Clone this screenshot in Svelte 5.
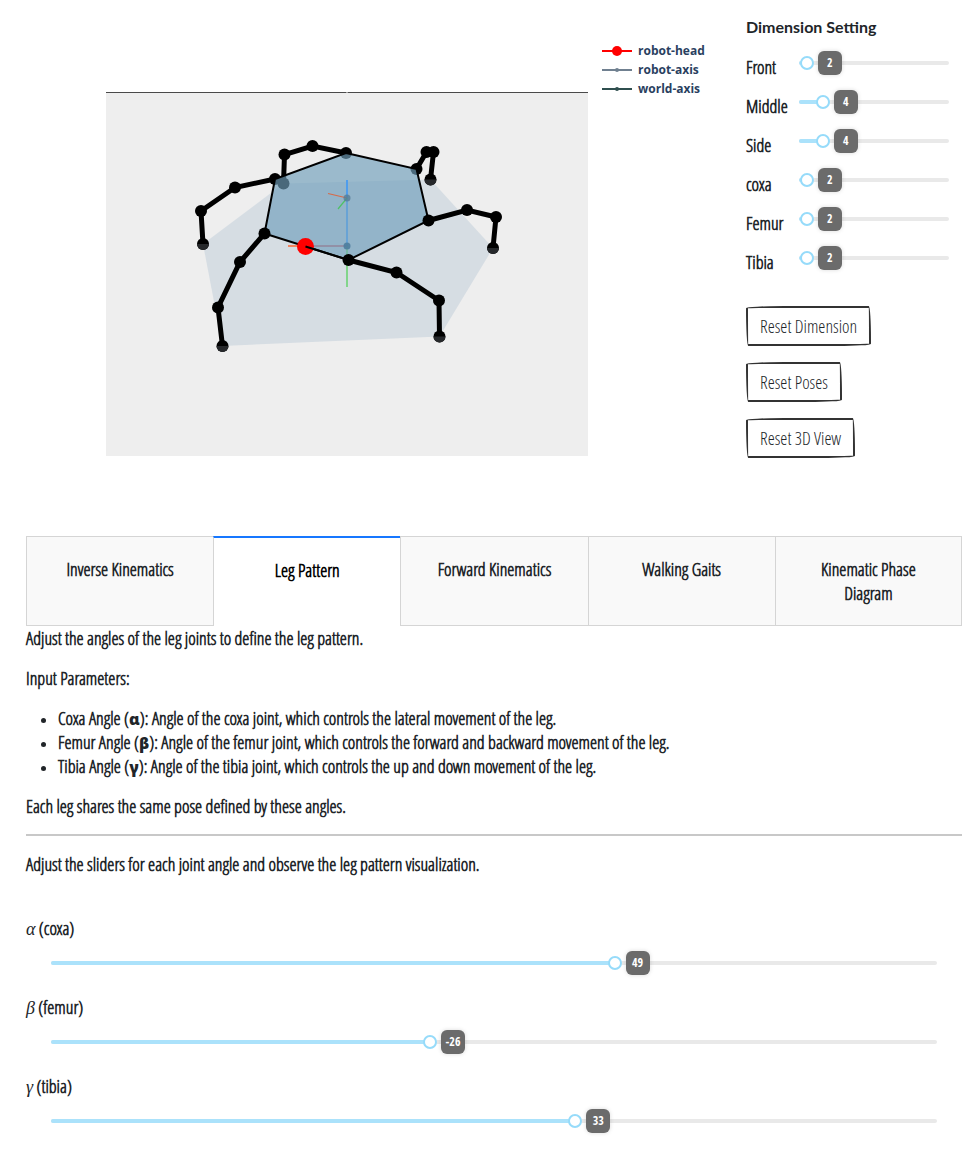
<script>
  let dimensions = $state([
    { name: 'Front', value: 2 },
    { name: 'Middle', value: 4 },
    { name: 'Side', value: 4 },
    { name: 'coxa', value: 2 },
    { name: 'Femur', value: 2 },
    { name: 'Tibia', value: 2 }
  ]);
  let angles = $state([
    { symbol: 'α', name: 'coxa', value: 49 },
    { symbol: 'β', name: 'femur', value: -26 },
    { symbol: 'γ', name: 'tibia', value: 33 }
  ]);
  const tabs = ['Inverse Kinematics', 'Leg Pattern', 'Forward Kinematics', 'Walking Gaits', 'Kinematic Phase Diagram'];
  let active = $state(1);

  const backLegs = [
    [[346, 153], [312.5, 146], [284.5, 154.5], [283.5, 183.5]],
    [[275, 179], [235, 187.5], [201, 211], [203, 244]],
    [[416.5, 169], [426.5, 152], [433.5, 152], [430.5, 179.5]]
  ];
  const frontLegs = [
    [[264.5, 233.5], [240, 262], [218, 307.5], [222.5, 346]],
    [[348.5, 260], [396.5, 272.5], [439, 300.5], [439.5, 336.5]],
    [[428.5, 220.5], [467, 210], [496, 217], [493, 248]]
  ];
  const shadedFeet = [[203, 244], [222.5, 346], [439.5, 336.5], [493, 248], [430.5, 179.5]];
  const body = '346,153 416.5,169 428.5,220.5 348.5,260 264.5,233.5 275,179';

  const pct = (v, min, max) => ((v - min) / (max - min)) * 100;
  function resetDimensions() {
    [2, 4, 4, 2, 2, 2].forEach((v, i) => (dimensions[i].value = v));
  }
  function resetPoses() {
    [49, -26, 33].forEach((v, i) => (angles[i].value = v));
  }
</script>

{#snippet slider(item, id, min, max)}
  <div class="slider">
    <div class="track"><div class="fill" style="width: {pct(item.value, min, max)}%"></div></div>
    <input type="range" {id} {min} {max} bind:value={item.value} />
    <output class="badge" for={id} style="left: {pct(item.value, min, max)}%">{item.value}</output>
  </div>
{/snippet}

{#snippet leg(points)}
  <polyline class="limb" points={points.map((p) => p.join(',')).join(' ')} />
  {#each points as [x, y]}<circle cx={x} cy={y} r="6" />{/each}
{/snippet}

<main>
  <section class="top">
    <div class="plot">
      <svg class="scene" viewBox="106 92 482 364" role="img" aria-label="Hexapod robot">
        <rect x="106" y="92" width="482" height="364" fill="#eee" />
        <path d="M106 92.5H346.500M347.500 92.5H588" stroke="#4a4a4a" />
        <polygon points="203,244 222.5,346 439.5,336.5 493,248 430.5,179.5 283.5,183.5" fill="#d6dde3" />
        {#each backLegs as l}{@render leg(l)}{/each}
        <polygon points={body} fill="#709fbb" fill-opacity=".66" />
        <g fill="none" stroke-width="2">
          <path d="M288 246H306" stroke="#f28560" />
          <path d="M306 246H347" stroke="#9290a6" />
          <path d="M347 180V198" stroke="#4f9dec" />
          <path d="M347 198V246" stroke="#68a3d5" />
          <path d="M347 246V260" stroke="#78b7a6" />
          <path d="M347 260V287" stroke="#82d58b" />
          <path d="M347 198L328 193.500" stroke="#d66a49" stroke-width="1.2" />
          <path d="M347 198L338 209" stroke="#4dc265" stroke-width="1.2" />
        </g>
        <circle cx="347" cy="198" r="3.5" fill="#557d99" fill-opacity=".8" />
        <circle cx="347" cy="246" r="3.5" fill="#4e7d9d" fill-opacity=".9" />
        <polygon points={body} fill="none" stroke="#000" stroke-width="2" />
        <circle cx="305.500" cy="246.500" r="8.5" fill="#f00" />
        <path d="M305.500 246.500L348.500 260" stroke="#000" stroke-width="2" />
        {#each frontLegs as l}{@render leg(l)}{/each}
        {#each shadedFeet as [x, y]}
          <path d="M{x - 6} {y}A6 6 0 0 0 {x + 6} {y}Z" fill="#26282b" />
        {/each}
      </svg>
      <ul class="legend">
        <li>
          <svg width="30" height="12"><path d="M0 6H30" stroke="#f00" stroke-width="2" /><circle cx="15" cy="6" r="5" fill="#f00" /></svg>
          robot-head
        </li>
        <li>
          <svg width="30" height="12"><path d="M0 6H30" stroke="#708090" stroke-width="2" /><circle cx="15" cy="6" r="2" fill="#708090" /></svg>
          robot-axis
        </li>
        <li>
          <svg width="30" height="12"><path d="M0 6H30" stroke="#2f4f4f" stroke-width="2" /><circle cx="15" cy="6" r="2" fill="#2f4f4f" /></svg>
          world-axis
        </li>
      </ul>
    </div>

    <aside>
      <h2>Dimension Setting</h2>
      {#each dimensions as d}
        <div class="dimension">
          <label for="dim-{d.name}">{d.name}</label>
          {@render slider(d, `dim-${d.name}`, 1, 20)}
        </div>
      {/each}
      <div class="buttons">
        <button onclick={resetDimensions}>Reset Dimension</button>
        <button onclick={resetPoses}>Reset Poses</button>
        <button>Reset 3D View</button>
      </div>
    </aside>
  </section>

  <div class="tabs" role="tablist">
    {#each tabs as tab, i}
      <button role="tab" class:active={active === i} aria-selected={active === i} onclick={() => (active = i)}>{tab}</button>
    {/each}
  </div>

  <section class="panel">
    <p>Adjust the angles of the leg joints to define the leg pattern.</p>
    <p>Input Parameters:</p>
    <ul>
      <li>Coxa Angle (<b>α</b>): Angle of the coxa joint, which controls the lateral movement of the leg.</li>
      <li>Femur Angle (<b>β</b>): Angle of the femur joint, which controls the forward and backward movement of the leg.</li>
      <li>Tibia Angle (<b>γ</b>): Angle of the tibia joint, which controls the up and down movement of the leg.</li>
    </ul>
    <p>Each leg shares the same pose defined by these angles.</p>
    <hr />
    <p>Adjust the sliders for each joint angle and observe the leg pattern visualization.</p>
    <div class="angles">
      {#each angles as a}
        <div class="angle">
          <label for="angle-{a.name}"><i>{a.symbol}</i> ({a.name})</label>
          {@render slider(a, `angle-${a.name}`, -180, 180)}
        </div>
      {/each}
    </div>
  </section>
</main>

<style>
  :global(body) {
    background: #fff;
  }
  main {
    padding: 15px 9px 15px 26px;
    color: #212529;
    font: 700 18px/24px 'Open Sans Condensed Light', 'Liberation Sans Narrow', 'Open Sans', sans-serif;
  }
  .top {
    display: grid;
    grid-template-columns: minmax(0, 1fr) 216px;
  }
  .plot {
    display: flex;
    align-items: flex-start;
    gap: 14px;
    padding: 26px 0 0 80px;
  }
  .scene {
    display: block;
    flex: 1;
    min-width: 0;
    margin-top: 51px;
  }
  .limb {
    fill: none;
    stroke: #000;
    stroke-width: 5;
  }
  .legend {
    width: 144px;
    margin: 0;
    padding: 0;
    list-style: none;
    color: #2a3f5f;
    font: 700 12px/19px 'Open Sans', sans-serif;
  }
  .legend li {
    display: flex;
    align-items: center;
    gap: 6px;
  }
  h2 {
    margin: 0 0 9px;
    font: 700 16px/24px Lato, sans-serif;
  }
  .dimension {
    display: grid;
    grid-template-columns: 53px 1fr;
    height: 39px;
    padding-right: 13px;
  }
  .dimension label {
    line-height: 39px;
  }
  .dimension .slider {
    margin-top: 3px;
  }
  .slider {
    position: relative;
    height: 24px;
    display: flex;
    align-items: center;
  }
  .track {
    width: 100%;
    height: 4px;
    border-radius: 2px;
    background: #e9e9e9;
    overflow: hidden;
  }
  .fill {
    height: 100%;
    background: #abe2fb;
  }
  .slider input {
    position: absolute;
    left: -7px;
    width: calc(100% + 14px);
    height: 24px;
    margin: 0;
    background: none;
    appearance: none;
    cursor: pointer;
  }
  .slider input::-webkit-slider-thumb {
    appearance: none;
    box-sizing: border-box;
    width: 14px;
    height: 14px;
    border: 2px solid #96dbfa;
    border-radius: 50%;
    background: #fff;
  }
  .badge {
    position: absolute;
    width: 24px;
    height: 24px;
    margin-left: 11px;
    border-radius: 6px;
    background: #6b6b6b;
    box-shadow: 0 0 4px rgba(0, 0, 0, 0.15);
    color: #fff;
    font-family: 'Open Sans Condensed', 'Open Sans', sans-serif;
    font-size: 12px;
    text-align: center;
    pointer-events: none;
  }
  .buttons {
    display: flex;
    flex-direction: column;
    align-items: flex-start;
    gap: 16px;
    margin-top: 24px;
  }
  .buttons button {
    height: 40px;
    padding: 0 12px;
    border: 2px solid #333;
    border-radius: 255px 15px 225px 15px / 15px 225px 15px 255px;
    background: #fff;
    color: #212529;
    font: inherit;
    font-weight: 300;
  }
  .tabs {
    display: grid;
    grid-template-columns: repeat(5, 1fr);
    margin-top: 78px;
  }
  .tabs button {
    display: flex;
    align-items: flex-start;
    justify-content: center;
    padding: 20px 28px;
    border: 1px solid #d5d5d5;
    border-right-width: 0;
    background: #f9f9f9;
    color: #212529;
    font: inherit;
    text-align: center;
  }
  .tabs button:last-child {
    border-right-width: 1px;
  }
  .tabs button.active {
    border-top: 2px solid #1677ff;
    border-bottom: 0;
    background: #fff;
    color: #000;
  }
  .panel p,
  .panel ul {
    margin: 0 0 16px;
  }
  .panel ul {
    padding-left: 32px;
  }
  .panel li::marker {
    font-size: 15px;
  }
  .panel b {
    font-family: 'Noto Sans', sans-serif;
    font-size: 16px;
    line-height: 1;
  }
  hr {
    height: 2px;
    margin: 0 0 16px;
    border: 0;
    background: #c8c8c8;
  }
  .angles {
    padding-top: 24px;
  }
  .angle label {
    display: block;
  }
  .angle i {
    font: italic 400 18px/18px 'Liberation Serif', serif;
  }
  .angle .slider {
    margin: 11px 25px 20px;
  }
</style>
